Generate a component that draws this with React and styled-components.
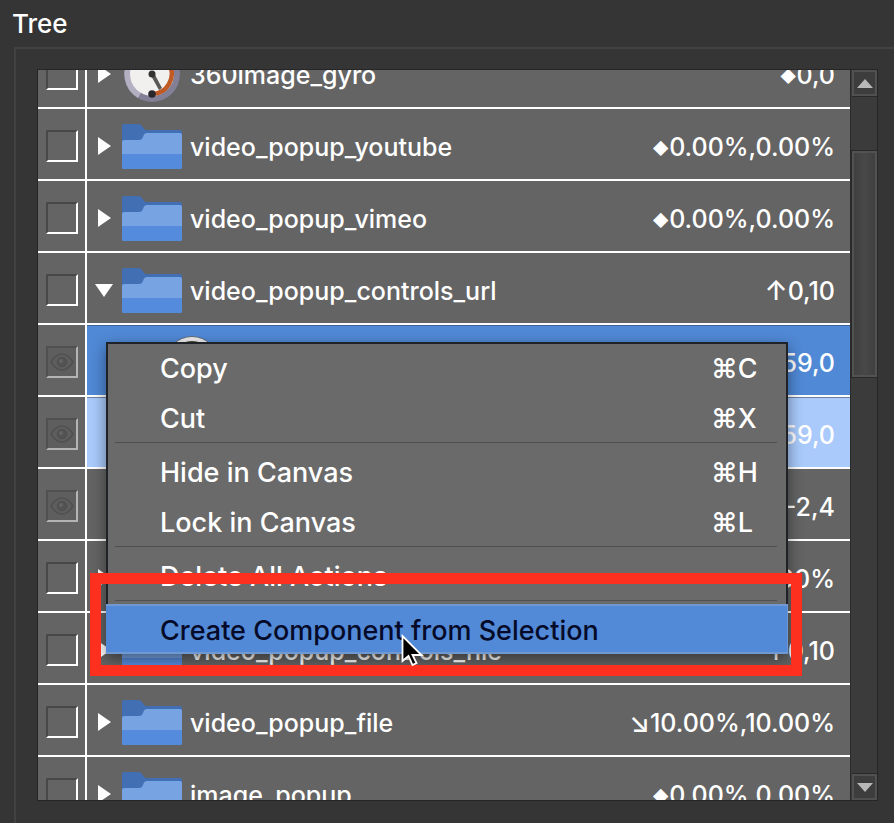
import React from 'react';
import styled, { createGlobalStyle, css } from 'styled-components';

const Global = createGlobalStyle`
  *, *::before, *::after { box-sizing: border-box; }
  body { margin: 0; background: #353535; color: #fff; font-family: Inter, "Noto Sans", "DejaVu Sans", sans-serif; font-size: 25px; line-height: 32px; font-weight: 500; }
  button, input { font: inherit; margin: 0; padding: 0; }
`;

const Page = styled.main`
  position: relative;
  display: flex;
  flex-direction: column;
  height: 100vh;
  min-height: 720px;
  overflow: hidden;
`;
const Title = styled.h1`
  margin: 0;
  padding: 8px 12px 7px;
  font-size: 26px;
  line-height: 32px;
  font-weight: 500;
`;
const Panel = styled.section`
  flex: 1;
  min-height: 0;
  display: flex;
  margin-left: 14px;
  padding: 20px 16px 22px 21px;
  border-top: 2px solid #424242;
  border-left: 2px solid #424242;
`;
const TreeBox = styled.div`
  flex: 1;
  min-width: 0;
  display: flex;
  border: 1px solid #262626;
`;
const Viewport = styled.div`
  flex: 1;
  min-width: 0;
  overflow: hidden;
  background: #646464;
`;
const Rows = styled.ul`
  list-style: none;
  margin: -33px 0 0;
  padding: 0;
`;
const Row = styled.li`
  display: flex;
  height: 72px;
  border-bottom: 2px solid #fff;
`;
const CheckCell = styled.label`
  display: grid;
  place-items: center;
  flex: none;
  width: 49px;
  padding-top: 4px;
  border-right: 2px solid #fff;
  > * { grid-area: 1 / 1; }
`;
const Check = styled.input`
  appearance: none;
  width: 32px;
  height: 32px;
  border: 2px solid;
  border-color: ${p => (p.$dim ? '#505050 #b4b4b4 #b4b4b4 #505050' : '#484848 #fff #fff #484848')};
  background: ${p => (p.$dim ? '#5e5e5e' : '#646464')};
`;
const tones = {
  plain: css`background: #646464;`,
  selected: css`background: #5089d6; box-shadow: inset 0 1px #3f6291;`,
  child: css`background: #a9cafb; box-shadow: inset 0 1px #6c7f9b;`,
};
const Content = styled.div`
  flex: 1;
  min-width: 0;
  display: flex;
  align-items: center;
  padding: 4px 15px 0 0;
  ${p => tones[p.$tone]}
`;
const Toggle = styled.button`
  flex: none;
  display: grid;
  place-items: center;
  width: 35px;
  height: 32px;
  border: 0;
  background: none;
  color: #fff;
`;
const IconSlot = styled.span`
  flex: none;
  width: 60px;
  height: 56px;
  margin-left: ${p => (p.$nested ? 75 : 0)}px;
`;
const Name = styled.span`
  flex: 1;
  min-width: 0;
  padding: 2px 0 0 8px;
  white-space: nowrap;
`;
const Value = styled.span`
  flex: none;
  display: flex;
  align-items: center;
  margin-left: auto;
  padding-top: 2px;
  white-space: nowrap;
`;
const Anchor = styled.span`
  font-size: ${p => (p.$small ? 16 : 27)}px;
  padding: ${p => (p.$small ? '2px 0 0' : '0')};
`;
const Scrollbar = styled.div`
  flex: none;
  width: 27px;
  display: flex;
  flex-direction: column;
  padding: 0 0 0 1px;
  border-left: 1px solid #292929;
  background: #3b3b3b;
`;
const ArrowButton = styled.button`
  flex: none;
  display: grid;
  place-items: center;
  height: 26px;
  border: 2px solid #515151;
  background: #3d3d3d;
  color: #b8b8b8;
`;
const Track = styled.div`
  flex: 1;
  display: grid;
  grid-template-rows: 54fr 227fr 397fr;
  border-block: 1px solid #292929;
`;
const Thumb = styled.div`
  grid-row: 2;
  border: 2px solid #525252;
  outline: 1px solid #292929;
  background: linear-gradient(90deg, #404040, #484848 50%, #404040);
`;

const Menu = styled.div`
  position: absolute;
  left: 106px;
  top: 342px;
  width: 682px;
  font-size: 27px;
  background: #6a6a6a;
  box-shadow: inset 0 0 0 2px #1f2226, 0 5px 14px rgba(0, 0, 0, 0.45);
`;
const MenuItem = styled.button`
  display: flex;
  align-items: center;
  justify-content: space-between;
  width: 100%;
  height: 50px;
  padding: 4px 28px 0 54px;
  border: 0;
  text-align: left;
  color: ${p => (p.$active ? '#050a28' : '#fff')};
  background: ${p => (p.$active ? '#528ad8' : 'none')};
  box-shadow: ${p => (p.$active ? 'inset 0 2px #7099d1, inset 0 -2px #7099d1, inset -1px 0 #7099d1' : 'none')};
`;
const Shortcut = styled.kbd`
  width: 49px;
  font: inherit;
  white-space: nowrap;
`;
const Separator = styled.hr`
  height: 4px;
  margin: 0 11px 0 9px;
  border: 0;
  border-top: 1px solid #505050;
`;
const Highlight = styled.div`
  position: absolute;
  left: 90px;
  top: 573px;
  width: 712px;
  height: 103px;
  border: 11px solid #fd301f;
  pointer-events: none;
`;
const Pointer = styled.svg`
  position: absolute;
  left: 401px;
  top: 634px;
`;

const Right = () => (
  <svg width="13" height="18" viewBox="0 0 13 18" aria-hidden="true"><path d="M0 0l13 9-13 9z" fill="currentColor" /></svg>
);
const Down = () => (
  <svg width="19" height="13" viewBox="0 0 19 13" aria-hidden="true"><path d="M0 0h18L9 13z" fill="currentColor" /></svg>
);
const Folder = () => (
  <svg width="60" height="56" viewBox="0 0 60 56" aria-hidden="true">
    <path d="M0 8q0-2 2-2h14q3 0 4 2l2 3q1 1 3 1h33q2 0 2 2v20H0z" fill="#426fb3" />
    <path d="M0 24q0-2 2-2h15q3 0 4-3 1-4 4-4h33q2 0 2 2v32q0 2-2 2H2q-2 0-2-2z" fill="#77a3e2" />
    <path d="M0 36h60v13q0 2-2 2H2q-2 0-2-2z" fill="#548bdc" />
  </svg>
);
const Gauge = () => (
  <svg width="60" height="56" viewBox="0 0 60 56" aria-hidden="true">
    <circle cx="30" cy="28" r="28" fill="#827f96" />
    <path d="M30 0a28 28 0 0 0-14 52l14-24z" fill="#b3b0c2" />
    <circle cx="30" cy="28" r="22" fill="#f2f0ee" />
    <path d="M30 48a20 20 0 0 0 17-30" fill="none" stroke="#c05a24" strokeWidth="4.500" />
    <path d="M28 28l4-1 8 15-3 2z" fill="#585858" />
    <circle cx="30" cy="28" r="3.500" fill="#333" />
    <circle cx="30" cy="48" r="3.800" fill="#29272c" />
  </svg>
);
const Dial = () => (
  <svg width="60" height="56" viewBox="0 0 60 56" aria-hidden="true">
    <circle cx="30" cy="29" r="26.500" fill="#ececec" stroke="#5a6a80" />
    <circle cx="30" cy="29" r="21.500" fill="#d8d8d8" stroke="#4a4038" />
  </svg>
);
const Eye = () => (
  <svg width="26" height="20" viewBox="0 0 26 20" fill="none" stroke="#505050" strokeWidth="1.500" aria-hidden="true">
    <path d="M2 10Q7 2 13 2t11 8Q19 18 13 18T2 10z" />
    <circle cx="13" cy="10" r="4.500" fill="#535353" />
    <circle cx="12" cy="9" r="2" fill="#646464" stroke="none" />
  </svg>
);

const icons = { folder: Folder, gauge: Gauge, dial: Dial };

const items = [
  { name: '360image_gyro', icon: 'gauge', toggle: 'right', anchor: '◆', value: '0,0' },
  { name: 'video_popup_youtube', icon: 'folder', toggle: 'right', anchor: '◆', value: '0.00%,0.00%' },
  { name: 'video_popup_vimeo', icon: 'folder', toggle: 'right', anchor: '◆', value: '0.00%,0.00%' },
  { name: 'video_popup_controls_url', icon: 'folder', toggle: 'down', anchor: '↑', value: '0,10' },
  { icon: 'dial', nested: true, dim: true, tone: 'selected', value: '59,0' },
  { dim: true, tone: 'child', value: '59,0' },
  { dim: true, value: '-2,4' },
  { icon: 'folder', toggle: 'right', value: '0.00%' },
  { name: 'video_popup_controls_file', icon: 'folder', toggle: 'right', anchor: '↑', value: '0,10' },
  { name: 'video_popup_file', icon: 'folder', toggle: 'right', anchor: '↘', value: '10.00%,10.00%' },
  { name: 'image_popup', icon: 'folder', toggle: 'right', anchor: '◆', value: '0.00%,0.00%' },
];

function TreeRow({ item }) {
  const Icon = icons[item.icon];
  return (
    <Row>
      <CheckCell>
        <Check type="checkbox" $dim={item.dim} aria-label={item.name || 'Visible'} />
        {item.dim && <Eye />}
      </CheckCell>
      <Content $tone={item.tone || 'plain'}>
        {item.toggle && (
          <Toggle aria-label="Toggle">{item.toggle === 'down' ? <Down /> : <Right />}</Toggle>
        )}
        {Icon && <IconSlot $nested={item.nested}><Icon /></IconSlot>}
        {item.name && <Name>{item.name}</Name>}
        <Value>
          {item.anchor && <Anchor $small={item.anchor === '◆'}>{item.anchor}</Anchor>}
          {item.value}
        </Value>
      </Content>
    </Row>
  );
}

export default function App() {
  return (
    <>
      <Global />
      <Page>
        <Title>Tree</Title>
        <Panel>
          <TreeBox>
            <Viewport>
              <Rows>{items.map((item, i) => <TreeRow key={i} item={item} />)}</Rows>
            </Viewport>
            <Scrollbar>
              <ArrowButton aria-label="Scroll up">
                <svg width="16" height="9" viewBox="0 0 16 9"><path d="M0 9h16L8 0z" fill="currentColor" /></svg>
              </ArrowButton>
              <Track><Thumb /></Track>
              <ArrowButton aria-label="Scroll down">
                <svg width="16" height="9" viewBox="0 0 16 9"><path d="M0 0h16L8 9z" fill="currentColor" /></svg>
              </ArrowButton>
            </Scrollbar>
          </TreeBox>
        </Panel>
        <Menu role="menu">
          <MenuItem role="menuitem">Copy<Shortcut>⌘C</Shortcut></MenuItem>
          <MenuItem role="menuitem">Cut<Shortcut>⌘X</Shortcut></MenuItem>
          <Separator />
          <MenuItem role="menuitem">Hide in Canvas<Shortcut>⌘H</Shortcut></MenuItem>
          <MenuItem role="menuitem">Lock in Canvas<Shortcut>⌘L</Shortcut></MenuItem>
          <Separator />
          <MenuItem role="menuitem">Delete All Actions</MenuItem>
          <Separator />
          <MenuItem role="menuitem" $active>Create Component from Selection</MenuItem>
        </Menu>
        <Highlight />
        <Pointer width="25" height="34" viewBox="0 0 25 34" aria-hidden="true">
          <path d="M1.500 2v25l6-5 4 9 4-2-4-8h9z" fill="#000" stroke="#fff" strokeWidth="1.800" />
        </Pointer>
      </Page>
    </>
  );
}
